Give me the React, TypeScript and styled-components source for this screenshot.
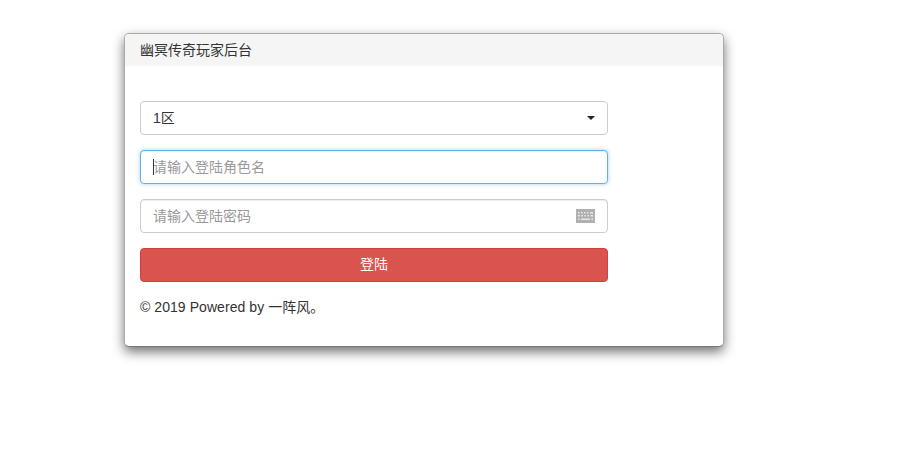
import styled, { createGlobalStyle } from 'styled-components';

const FONT = `'Liberation Sans', 'Noto Sans CJK SC', sans-serif`;

const GlobalStyle = createGlobalStyle`
  * {
    box-sizing: border-box;
  }
  body {
    margin: 0;
    background: #fff;
    font-family: ${FONT};
    font-size: 14px;
    color: #333;
  }
`;

const Page = styled.div`
  padding: 33px 0 0 124px;
  min-height: 467px;
`;

const Panel = styled.div`
  width: 600px;
  height: 314px;
  background: #fff;
  border: 1px solid #aaa;
  border-bottom-color: #777;
  border-radius: 5px;
  box-shadow: 0 5px 12px rgba(0, 0, 0, 0.55);
  overflow: hidden;
`;

const PanelHeading = styled.div`
  height: 32px;
  padding: 7px 15px 0 15px;
  background: #f5f5f5;
  font-size: 14px;
  line-height: 18px;
  color: #333;
`;

const PanelBody = styled.div`
  padding: 35px 15px 0 15px;
`;

const Form = styled.form`
  display: flex;
  flex-direction: column;
  gap: 15px;
  width: 468px;
`;

const Field = styled.div`
  position: relative;
  height: 34px;
`;

const Select = styled.select`
  display: block;
  width: 100%;
  height: 34px;
  padding: 0 12px;
  border: 1px solid #ccc;
  border-radius: 4px;
  background: #fff;
  font-family: ${FONT};
  font-size: 14px;
  color: #333;
  appearance: none;
  outline: none;
`;

const Arrow = styled.span`
  position: absolute;
  right: 13px;
  top: 15px;
  width: 0;
  height: 0;
  border-top: 4px solid #222;
  border-left: 4px solid transparent;
  border-right: 4px solid transparent;
  pointer-events: none;
`;

const Input = styled.input<{ $active?: boolean }>`
  display: block;
  width: 100%;
  height: 34px;
  padding: 0 12px 1px;
  border: 1px solid ${(p) => (p.$active ? '#66afe9' : '#ccc')};
  border-radius: 4px;
  background: #fff;
  font-family: ${FONT};
  font-size: 14px;
  color: #555;
  outline: none;
  box-shadow: ${(p) =>
    p.$active
      ? 'inset 0 1px 1px rgba(0,0,0,.075), 0 0 4px rgba(102,175,233,.6)'
      : 'inset 0 1px 1px rgba(0,0,0,.075)'};

  &::placeholder {
    color: #999;
    opacity: 1;
  }
`;

const Caret = styled.span`
  position: absolute;
  left: 13px;
  top: 9px;
  width: 1px;
  height: 16px;
  background: #333;
`;

const KeyboardIcon = styled.svg`
  position: absolute;
  right: 13px;
  top: 10px;
  width: 19px;
  height: 14px;
`;

const Submit = styled.button`
  display: block;
  width: 100%;
  height: 34px;
  padding: 0 0 4px;
  border: 1px solid #d43f3a;
  border-radius: 4px;
  background: #d9534f;
  font-family: ${FONT};
  font-size: 14px;
  color: #fff;
`;

const Copyright = styled.p`
  margin: 15px 0 0;
  font-size: 14px;
  line-height: 20px;
  letter-spacing: 0.06px;
  color: #333;
`;

function Keyboard() {
  return (
    <KeyboardIcon viewBox="0 0 19 14">
      <rect width="19" height="14" fill="#b0b0b0" />
      <g fill="#e8e8e8">
        <rect x="2" y="3" width="1.5" height="1.5" />
        <rect x="5" y="3" width="1.5" height="1.5" />
        <rect x="8" y="3" width="1.5" height="1.5" />
        <rect x="11" y="3" width="1.5" height="1.5" />
        <rect x="14" y="3" width="3" height="1.5" />
        <rect x="2" y="6" width="2" height="1.5" />
        <rect x="5.5" y="6" width="1.5" height="1.5" />
        <rect x="8.5" y="6" width="1.5" height="1.5" />
        <rect x="11.5" y="6" width="1.5" height="1.5" />
        <rect x="14.5" y="6" width="2.5" height="1.5" />
        <rect x="2" y="9.5" width="1.5" height="1.5" />
        <rect x="5" y="9.5" width="9" height="1.5" />
        <rect x="15.5" y="9.5" width="1.5" height="1.5" />
      </g>
    </KeyboardIcon>
  );
}

function App() {
  return (
    <Page>
      <GlobalStyle />
      <Panel>
        <PanelHeading>幽冥传奇玩家后台</PanelHeading>
        <PanelBody>
          <Form onSubmit={(e) => e.preventDefault()}>
            <Field>
              <Select defaultValue="1">
                <option value="1">1区</option>
              </Select>
              <Arrow />
            </Field>
            <Field>
              <Input $active placeholder="请输入登陆角色名" />
              <Caret />
            </Field>
            <Field>
              <Input type="password" placeholder="请输入登陆密码" />
              <Keyboard />
            </Field>
            <Submit type="submit">登陆</Submit>
          </Form>
          <Copyright>© 2019 Powered by 一阵风。</Copyright>
        </PanelBody>
      </Panel>
    </Page>
  );
}

export default App;
